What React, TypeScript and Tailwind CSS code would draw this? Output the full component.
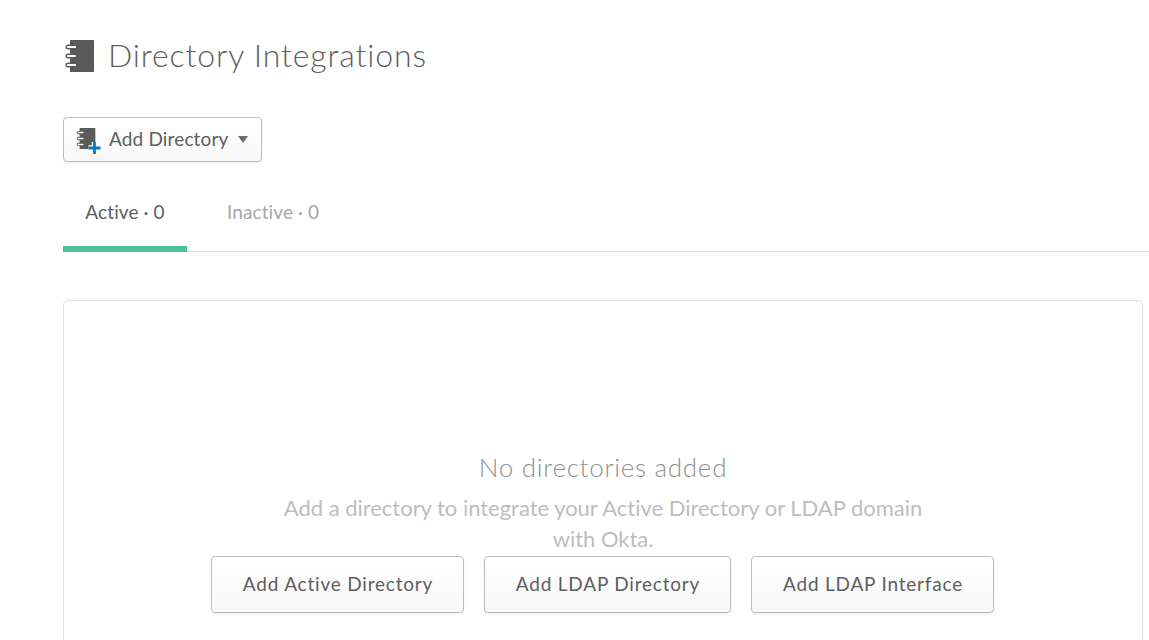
import React from "react";

function BookIcon({ className }: { className?: string }) {
  return (
    <svg viewBox="0 0 32 32" className={className}>
      <path d="M7 0h23a1 1 0 0 1 1 1v30a1 1 0 0 1-1 1H7z" fill="#5a5a5a" />
      <g fill="none" strokeLinecap="round">
        <path d="M5 7h8M5 16h8M5 25h8" stroke="#5a5a5a" strokeWidth="5" />
        <path d="M5 7h7M5 16h7M5 25h7" stroke="#fff" strokeWidth="2.2" />
      </g>
    </svg>
  );
}

function CardButton({ children, width }: { children: React.ReactNode; width: string }) {
  return (
    <button
      className={`${width} h-[57px] shrink-0 rounded-[4px] border border-[#bcbcbc] bg-gradient-to-b from-white to-[#f8f8f8] pl-[2px] text-[19px] tracking-[0.8px] text-[#5e5e5e] shadow-[0_1px_2px_rgba(0,0,0,0.08)]`}
    >
      {children}
    </button>
  );
}

export default function App() {
  return (
    <div className="h-screen overflow-hidden bg-white pl-[63px] font-['Lato','Noto_Sans',sans-serif]">
      {/* Titre */}
      <div className="flex h-[112px] items-center gap-[13px] pb-[1px]">
        <BookIcon className="mt-[1px] h-[32px] w-[32px]" />
        <h1 className="mb-[2px] text-[32px] leading-none font-light tracking-[0.85px] text-[#5e5e5e]">
          Directory Integrations
        </h1>
      </div>

      {/* Bouton */}
      <button className="mt-[5px] flex h-[45px] w-[199px] items-center rounded-[4px] border border-[#bcbcbc] bg-gradient-to-b from-white to-[#f8f8f8] pl-[11px] text-[19px] tracking-[0.15px] text-[#5e5e5e] shadow-[0_1px_2px_rgba(0,0,0,0.08)]">
        <span className="relative mr-[10px] h-[24px] w-[24px]">
          <BookIcon className="h-[21px] w-[21px]" />
          <svg viewBox="0 0 13 13" className="absolute top-[14px] left-[13px] h-[12px] w-[13px] overflow-visible">
            <path d="M6.5 0v13M0 6.5h13" stroke="#fff" strokeWidth="6" />
            <path d="M6.5 0v13M0 6.5h13" stroke="#007dc1" strokeWidth="3" />
          </svg>
        </span>
        Add Directory
        <span className="ml-[10px] h-0 w-0 border-x-[5.5px] border-t-[7px] border-x-transparent border-t-[#6e6e6e]" />
      </button>

      {/* Onglets */}
      <div className="mt-[23px] flex h-[67px] items-start border-b border-[#dcdcdc] pt-[13px] text-[19px] tracking-[0.1px]">
        <div className="relative h-[53px] w-[124px] text-center text-[#5e5e5e]">
          Active · 0
          <span className="absolute inset-x-0 bottom-[-1px] h-[6px] bg-[#4cbf9c]" />
        </div>
        <div className="ml-[40px] text-[#a7a7a7]">Inactive · 0</div>
      </div>

      {/* Carte vide */}
      <div className="mt-[48px] flex h-[400px] w-[1080px] flex-col items-center rounded-[5px] border border-[#dedede] pt-[149px]">
        <h2 className="text-[26px] leading-[34px] font-light tracking-[0.7px] text-[#8f8f8f]">No directories added</h2>
        <p className="mt-[8px] w-[660px] text-center text-[22px] leading-[31px] tracking-[-0.02px] text-[#bdbdbd]">
          Add a directory to integrate your Active Directory or LDAP domain with Okta.
        </p>
        <div className="mt-[2px] mr-[2px] flex gap-[20px]">
          <CardButton width="w-[253px]">Add Active Directory</CardButton>
          <CardButton width="w-[247px]">Add LDAP Directory</CardButton>
          <CardButton width="w-[243px]">Add LDAP Interface</CardButton>
        </div>
      </div>
    </div>
  );
}
